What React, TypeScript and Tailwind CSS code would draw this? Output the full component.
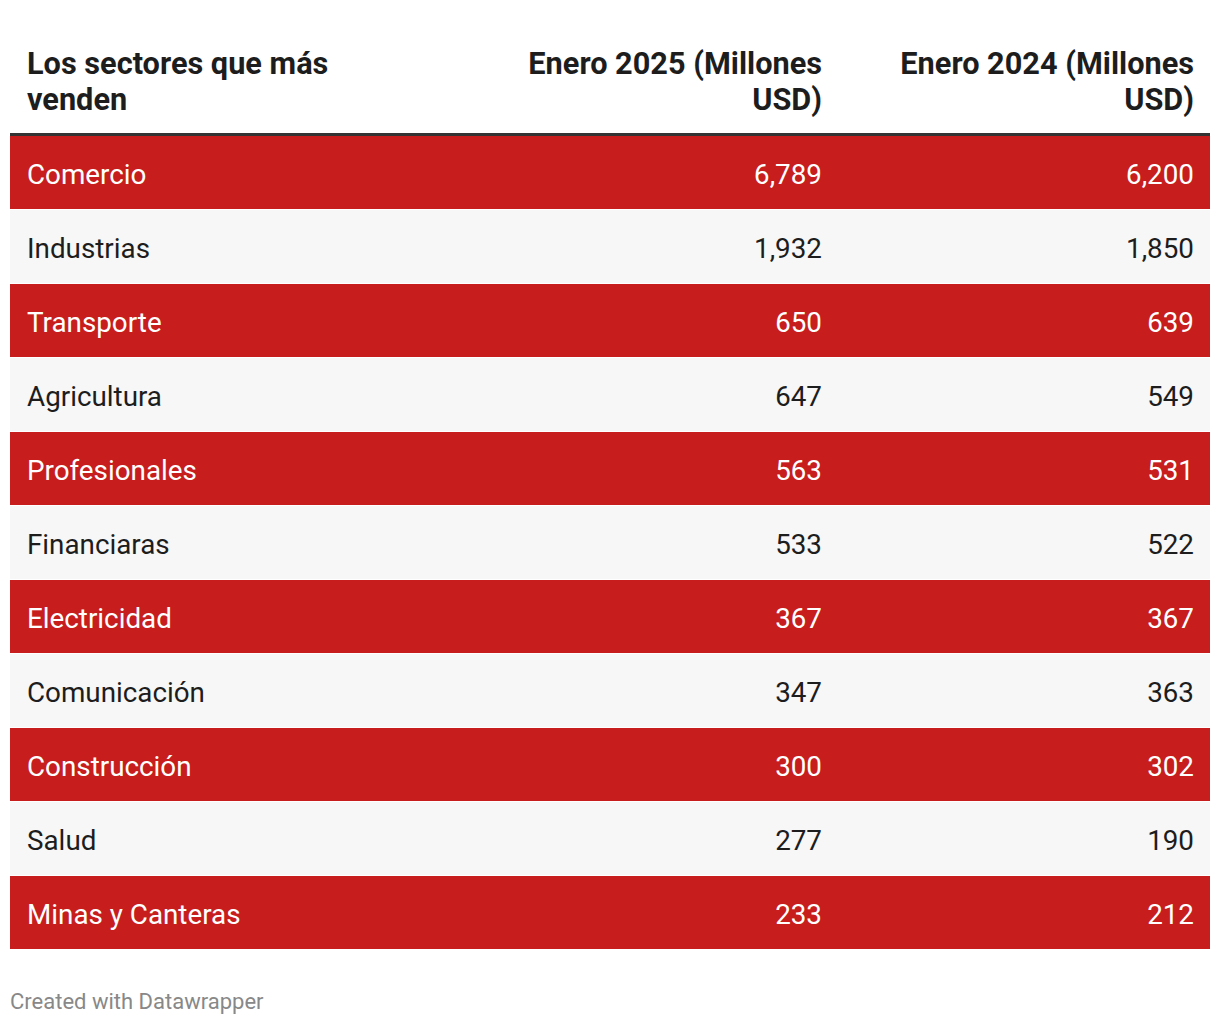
const rows: [string, string, string][] = [
  ["Comercio", "6,789", "6,200"],
  ["Industrias", "1,932", "1,850"],
  ["Transporte", "650", "639"],
  ["Agricultura", "647", "549"],
  ["Profesionales", "563", "531"],
  ["Financiaras", "533", "522"],
  ["Electricidad", "367", "367"],
  ["Comunicación", "347", "363"],
  ["Construcción", "300", "302"],
  ["Salud", "277", "190"],
  ["Minas y Canteras", "233", "212"],
];

const App = () => {
  return (
    <div className="bg-white px-[10px] font-['Roboto',sans-serif] text-[#1d1d1d]">
      <div className="grid grid-cols-[456px_372px_372px] border-b-[3px] border-[#333333] text-[30.7px] font-bold leading-[36px]">
        <div className="pt-[46px] pb-[15px] pl-[17px]">
          <div className="w-[340px]">Los sectores que más venden</div>
        </div>
        <div className="pt-[46px] pb-[15px] pr-[16px] text-right">Enero 2025 (Millones USD)</div>
        <div className="pt-[46px] pb-[15px] pr-[16px] text-right">Enero 2024 (Millones USD)</div>
      </div>
      {rows.map((r, i) => (
        <div
          key={r[0]}
          className={`grid h-[74px] grid-cols-[456px_372px_372px] items-center border-b border-white pt-[5px] text-[27.8px] tabular-nums ${
            i % 2 === 0 ? "bg-[#c71d1d] text-white" : "bg-[#f7f7f7] text-[#1d1d1d]"
          }`}
        >
          <div className="pl-[17px]">{r[0]}</div>
          <div className="pr-[16px] text-right">{r[1]}</div>
          <div className="pr-[16px] text-right">{r[2]}</div>
        </div>
      ))}
      <div className="pt-[38px] text-[22px] leading-[28px] text-[#888888]">Created with Datawrapper</div>
    </div>
  );
};

export default App;
